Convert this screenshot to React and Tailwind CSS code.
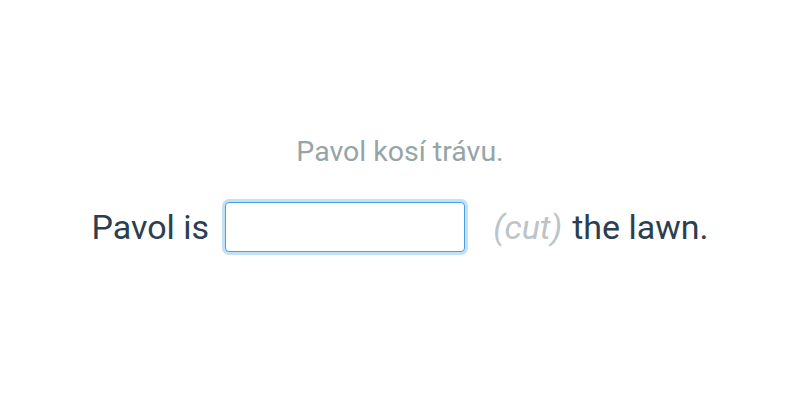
import React from 'react';

const App = () => {
  return (
    <div className="w-[800px] h-[400px] bg-white flex flex-col items-center justify-center font-['Roboto',sans-serif]">
      <p className="text-[28.5px] text-[#95a5a6] leading-none mt-[-10px] mb-[36px]">Pavol kosí trávu.</p>
      <div className="flex items-center text-[34px] text-[#2c3e50] leading-none">
        <span>Pavol is</span>
        <input
          type="text"
          className="ml-[16px] mr-[28px] w-[240px] h-[50px] rounded-[4px] border border-[#4a9fe0] ring-[3px] ring-[#c4e0f7] outline-none bg-white px-3 text-[24px]"
        />
        <span className="italic text-[#bdc3c7] mr-[10px]">(cut)</span>
        <span>the lawn.</span>
      </div>
    </div>
  );
};

export default App;
